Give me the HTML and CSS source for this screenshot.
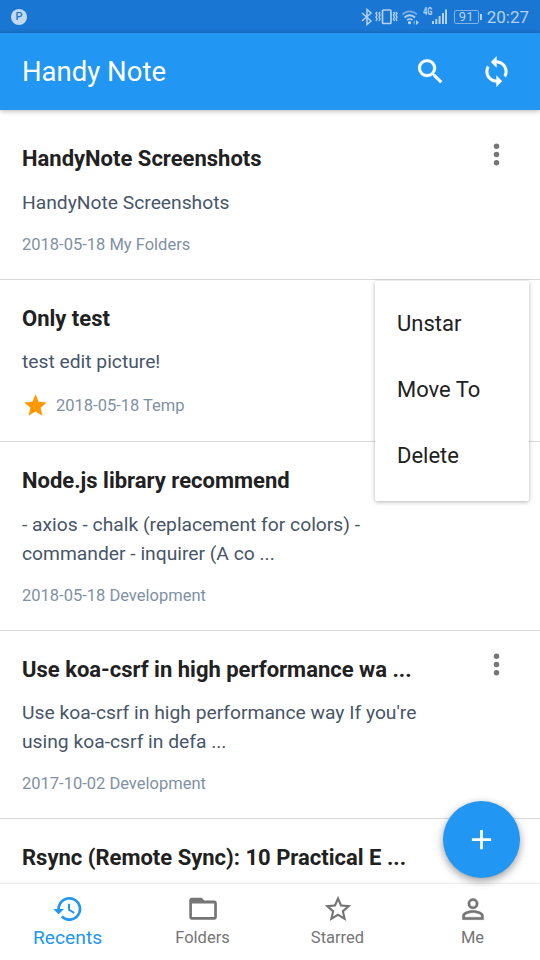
FILE: index.html
```
<!DOCTYPE html>
<html lang="en">
<head>
<meta charset="utf-8">
<title>Handy Note</title>
<link rel="stylesheet" href="styles.css">
</head>
<body>
<div class="app">
  <div class="status">
    <span class="status-app">P</span>
    <div class="status-icons">
      <svg width="86" height="18" viewBox="0 0 86 18" fill="none" stroke="currentColor" stroke-width="1.500">
        <path d="M1 5l9 8-4 3.500V1.500L10 5l-9 8"/>
        <rect x="21.500" y="2" width="8.500" height="13.500" rx="1" stroke-width="1.700"/>
        <path d="M19 4l-1 1.500 1 1.500-1 2 1 2-1 2M16 4l-1 1.500 1 1.500-1 2 1 2-1 2M32.500 4l1 1.500-1 1.500 1 2-1 2 1 2M35 4l1 1.500-1 1.500 1 2-1 2 1 2" stroke-width="1.400"/>
        <path d="M41.500 6.500c4-4.300 10.500-4.300 14.500 0" opacity=".6" stroke-width="1.800"/>
        <path d="M43.500 9.500c3-3 7.500-3 10.500 0M46 12.200c1.500-1.500 4-1.500 5.500 0" stroke-width="1.800"/>
        <g fill="currentColor" stroke="none">
          <circle cx="48.500" cy="14.700" r="1.600"/><path d="M55 12l3 2.500-3 2.500z"/><path opacity=".5" d="M54 12v5l-2-2.500z"/>
          <path d="M71 13h2v3h-2zM74.300 11h2v5h-2zM77.600 8h2v8h-2zM81 5h2v11h-2zM84 1.500h2V16h-2z"/>
        </g>
      </svg>
      <span class="network">4G</span>
      <span class="battery">91</span>
      <span class="clock">20:27</span>
    </div>
  </div>
  <header class="toolbar">
    <h1>Handy Note</h1>
    <div class="actions">
      <svg width="33" height="33" viewBox="0 0 24 24" fill="currentColor" stroke="currentColor" stroke-width=".25"><path d="M15.500 14h-.79l-.28-.27A6.471 6.471 0 0 0 16 9.500 6.500 6.500 0 1 0 9.500 16c1.610 0 3.090-.59 4.230-1.570l.27.28v.79l5 4.990L20.490 19l-4.990-5zm-6 0C7.010 14 5 11.990 5 9.500S7.010 5 9.500 5 14 7.010 14 9.500 11.990 14 9.500 14z"/></svg>
      <svg width="33" height="33" viewBox="0 0 24 24" fill="currentColor" stroke="currentColor" stroke-width=".25"><path d="M12 4V1L8 5l4 4V6c3.310 0 6 2.690 6 6 0 1.010-.25 1.970-.7 2.800l1.460 1.460A7.930 7.930 0 0 0 20 12c0-4.420-3.580-8-8-8zm0 14c-3.310 0-6-2.690-6-6 0-1.010.25-1.970.7-2.800L5.240 7.740A7.930 7.930 0 0 0 4 12c0 4.420 3.580 8 8 8v3l4-4-4-4v3z"/></svg>
    </div>
  </header>
  <main class="notes">
    <article class="note first">
      <h2>HandyNote Screenshots</h2>
      <p>HandyNote Screenshots</p>
      <footer>2018-05-18 My Folders</footer>
      <svg class="more" width="33" height="33" viewBox="0 0 24 24" fill="currentColor"><circle cx="12" cy="6" r="2"/><circle cx="12" cy="12" r="2"/><circle cx="12" cy="18" r="2"/></svg>
    </article>
    <article class="note starred">
      <h2>Only test</h2>
      <p>test edit picture!</p>
      <footer><svg width="27" height="27" viewBox="0 0 24 24" fill="currentColor"><path d="M12 17.270 18.180 21l-1.640-7.030L22 9.240l-7.190-.61L12 2 9.190 8.630 2 9.240l5.460 4.730L5.820 21z"/></svg>2018-05-18 Temp</footer>
      <div class="menu"><span>Unstar</span><span>Move To</span><span>Delete</span></div>
    </article>
    <article class="note long">
      <h2>Node.js library recommend</h2>
      <p>- axios - chalk (replacement for colors) -<br>commander - inquirer (A co ...</p>
      <footer>2018-05-18 Development</footer>
    </article>
    <article class="note long">
      <h2>Use koa-csrf in high performance wa ...</h2>
      <p>Use koa-csrf in high performance way If you're<br>using koa-csrf in defa ...</p>
      <footer>2017-10-02 Development</footer>
      <svg class="more" width="33" height="33" viewBox="0 0 24 24" fill="currentColor"><circle cx="12" cy="6" r="2"/><circle cx="12" cy="12" r="2"/><circle cx="12" cy="18" r="2"/></svg>
    </article>
    <article class="note">
      <h2>Rsync (Remote Sync): 10 Practical E ...</h2>
    </article>
  </main>
  <nav class="tabs">
    <div class="tab active">
      <svg width="32" height="32" viewBox="0 0 24 24" fill="currentColor"><path d="M13 3a9 9 0 0 0-9 9H1l3.890 3.890.07.14L9 12H6a7 7 0 1 1 2.060 4.940l-1.420 1.420A9 9 0 1 0 13 3zm-1 5v5l4.280 2.540.72-1.210-3.500-2.080V8z"/></svg>
      <span>Recents</span>
    </div>
    <div class="tab">
      <svg width="32" height="32" viewBox="0 0 24 24" fill="currentColor"><path d="M20.500 5.700h-7.500l-2-2.200H3.600c-1.100 0-1.900.9-1.900 2v12.500c0 1.100.8 2 1.900 2h16.900c1.100 0 1.900-.9 1.900-2V7.700c0-1.100-.8-2-1.900-2zm-.1 12.300H3.700V7.900h16.700z"/></svg>
      <span>Folders</span>
    </div>
    <div class="tab">
      <svg width="32" height="32" viewBox="0 0 24 24" fill="currentColor"><path d="M22 9.240l-7.190-.62L12 2 9.190 8.630 2 9.240l5.460 4.730L5.820 21 12 17.270 18.180 21l-1.630-7.030zM12 15.400l-3.760 2.270 1-4.280-3.320-2.880 4.380-.38L12 6.100l1.710 4.040 4.380.38-3.320 2.880 1 4.280z"/></svg>
      <span>Starred</span>
    </div>
    <div class="tab">
      <svg width="34" height="34" viewBox="0 0 24 24" fill="currentColor" stroke="currentColor" stroke-width=".2"><path d="M12 5.900a2.100 2.100 0 1 1 0 4.200 2.100 2.100 0 0 1 0-4.200m0 9c2.970 0 6.100 1.460 6.100 2.100v1.100H5.900V17c0-.64 3.130-2.100 6.100-2.100M12 4a4 4 0 1 0 0 8 4 4 0 0 0 0-8zm0 9c-2.670 0-8 1.340-8 4v3h16v-3c0-2.660-5.330-4-8-4z"/></svg>
      <span>Me</span>
    </div>
  </nav>
  <div class="fab"><svg width="33" height="33" viewBox="0 0 24 24" fill="currentColor"><path d="M19 13h-6v6h-2v-6H5v-2h6V5h2v6h6z"/></svg></div>
</div>
</body>
</html>
```
FILE: styles.css
```
* { box-sizing: border-box; }
body { margin: 0; font-family: Roboto, "Liberation Sans", sans-serif; }
h1, h2, p { margin: 0; }
svg { display: block; flex: none; }
.app { position: relative; width: 540px; height: 960px; overflow: hidden; display: flex; flex-direction: column; background: #fff; }
.status { flex: none; height: 33px; background: #1976d2; color: #b5d1ef; display: flex; justify-content: space-between; align-items: center; padding: 0 11px; }
.status-app { width: 16px; height: 16px; border-radius: 50%; background: #c3d9f2; color: #1976d2; font-size: 11px; line-height: 16px; text-align: center; font-weight: 500; }
.status-icons { position: relative; display: flex; align-items: center; }
.network { position: absolute; left: 62px; top: 1px; font-size: 10px; line-height: 10px; font-weight: 700; transform: scaleX(.75); transform-origin: left; }
.battery { position: relative; width: 25px; height: 14px; margin: 0 8px 0 7px; border: 1px solid #82b1e4; border-radius: 2px; font-size: 13px; line-height: 12px; text-align: center; }
.battery::after { content: ""; position: absolute; right: -4px; top: 3px; width: 2px; height: 6px; background: currentColor; }
.clock { font-size: 17px; line-height: 20px; padding-top: 1px; }
.toolbar { position: relative; z-index: 2; flex: none; height: 77px; background: #2196f3; color: #fff; display: flex; justify-content: space-between; align-items: center; padding: 0 27px 0 22px; box-shadow: 0 1px 5px rgba(0,0,0,.3); }
.toolbar h1 { font-size: 27.500px; font-weight: 400; }
.actions { display: flex; gap: 33px; }
.notes { flex: 1; min-height: 0; }
.note { position: relative; height: 162px; padding: 22px 22px 0; border-bottom: 1px solid #d9d9d9; }
.note.first { height: 170px; padding-top: 32px; }
.note.long { height: 188.500px; }
.note h2 { font-size: 22px; line-height: 33px; font-weight: 700; color: #212121; white-space: nowrap; }
.note p { margin-top: 12.600px; font-size: 19.250px; line-height: 29px; color: #475569; white-space: nowrap; }
.note footer { display: flex; align-items: center; gap: 7px; height: 29px; margin-top: 13px; font-size: 16.500px; color: #8090a5; }
.note.starred p { margin-top: 12px; }
.note.starred footer { margin-top: 15.200px; }
.starred footer svg { color: #ff9800; }
.more { position: absolute; right: 27px; top: 17px; color: #757575; }
.first .more { top: 27.500px; }
.menu { position: absolute; z-index: 3; top: 1px; right: 11px; width: 154px; height: 219.500px; padding: 10px 22px; background: #fff; border-radius: 2px; box-shadow: 0 1px 4px rgba(0,0,0,.3); display: flex; flex-direction: column; font-size: 22px; line-height: 66px; color: #212121; }
.tabs { position: relative; z-index: 2; flex: none; height: 77px; display: flex; background: #fff; border-top: 1px solid #eee; box-shadow: 0 -1px 2px rgba(0,0,0,.03); color: #757575; }
.tab { flex: 1; display: flex; flex-direction: column; align-items: center; padding-top: 9px; font-size: 16.500px; line-height: 26px; }
.tab svg { height: 32px; }
.tab.active { color: #2196f3; font-size: 19.250px; }
.fab { position: absolute; z-index: 4; right: 20.500px; top: 801.400px; width: 77px; height: 77px; border-radius: 50%; background: #2196f3; color: #fff; display: flex; align-items: center; justify-content: center; box-shadow: 0 3px 8px rgba(0,0,0,.4); }
```
